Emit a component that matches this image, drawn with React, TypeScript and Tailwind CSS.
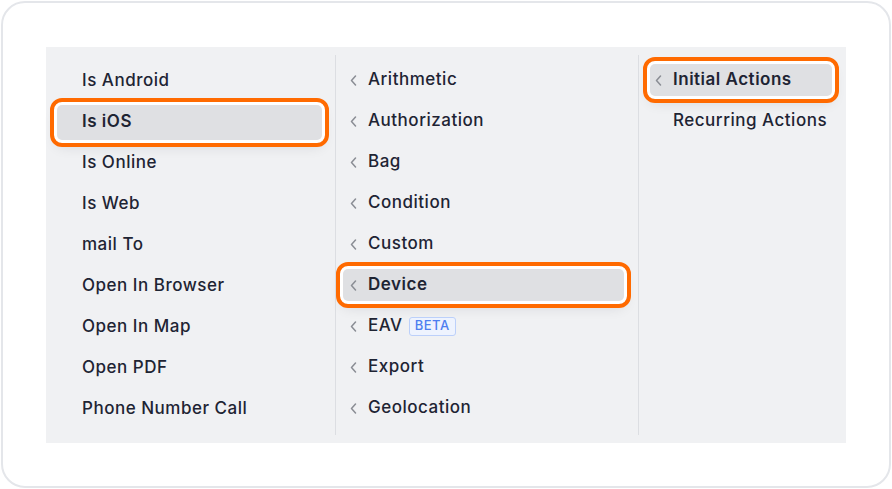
const platformItems = [
  'Is Android',
  'Is iOS',
  'Is Online',
  'Is Web',
  'mail To',
  'Open In Browser',
  'Open In Map',
  'Open PDF',
  'Phone Number Call',
];

const groupItems = [
  'Arithmetic',
  'Authorization',
  'Bag',
  'Condition',
  'Custom',
  'Device',
  'EAV',
  'Export',
  'Geolocation',
];

const selected = 'ring-[3px] ring-white outline-4 outline-offset-[3px] outline-[#ff6a00] shadow-[0_6px_14px_rgba(15,23,42,0.12)]';

function Chevron({ hidden = false }: { hidden?: boolean }) {
  return (
    <svg
      viewBox="0 0 7 11"
      className={`mr-[11px] h-[11px] w-[7px] shrink-0 ${hidden ? 'invisible' : ''}`}
      fill="none"
      stroke="#8a8d94"
      strokeWidth={1.5}
      strokeLinecap="round"
      strokeLinejoin="round"
    >
      <path d="M5.5 1 L1.5 5.5 L5.5 10" />
    </svg>
  );
}

export default function App() {
  return (
    <div className="h-[489px] w-[892px] bg-white p-px font-['Inter',sans-serif]">
      <div className="flex h-full w-full items-center justify-center rounded-[24px] border-2 border-[#e4e6ea] bg-white">
        <div className="flex h-[396px] w-[800px] bg-[#f0f1f3] text-[17px] font-medium tracking-[0.03em] text-[#1e2433]">
          {/* columna 1 */}
          <div className="flex w-[289px] flex-col pt-[14px]">
            {platformItems.map((item) => (
              <div key={item} className="flex h-[41px] items-center pl-[11px] pr-[13px]">
                {item === 'Is iOS' ? (
                  <div className={`flex h-[35px] w-full items-center rounded-[5px] bg-[#dfe0e3] pl-[25px] font-semibold ${selected}`}>
                    {item}
                  </div>
                ) : (
                  <div className="pl-[25px]">{item}</div>
                )}
              </div>
            ))}
          </div>
          <div className="my-[8px] w-px bg-[#dcdee2]" />

          {/* columna 2 */}
          <div className="flex w-[302px] flex-col pt-[13px]">
            {groupItems.map((item) => {
              const active = item === 'Device';
              return (
                <div key={item} className="flex h-[41px] items-center pl-[7px] pr-[14px]">
                  <div
                    className={`flex h-[32px] w-full items-center rounded-[5px] pl-[7px] ${
                      active ? `bg-[#dfe0e3] font-semibold ${selected}` : ''
                    }`}
                  >
                    <Chevron />
                    {item}
                    {item === 'EAV' && (
                      <span className="ml-[6px] flex h-[19px] items-center rounded-[3px] border border-[#bcd0fa] bg-[#eef3fe] px-[5px] text-[13px] font-medium tracking-[0.04em] text-[#4d7ef0]">
                        BETA
                      </span>
                    )}
                  </div>
                </div>
              );
            })}
          </div>
          <div className="my-[8px] w-px bg-[#dcdee2]" />

          {/* columna 3 */}
          <div className="flex flex-1 flex-col pt-[13px]">
            {['Initial Actions', 'Recurring Actions'].map((item) => {
              const active = item === 'Initial Actions';
              return (
                <div key={item} className="flex h-[41px] items-center pl-[11px] pr-[14px]">
                  <div
                    className={`flex h-[32px] w-full items-center rounded-[5px] pl-[5px] ${
                      active ? `bg-[#dfe0e3] font-semibold ${selected}` : ''
                    }`}
                  >
                    <Chevron hidden={!active} />
                    {item}
                  </div>
                </div>
              );
            })}
          </div>
        </div>
      </div>
    </div>
  );
}
